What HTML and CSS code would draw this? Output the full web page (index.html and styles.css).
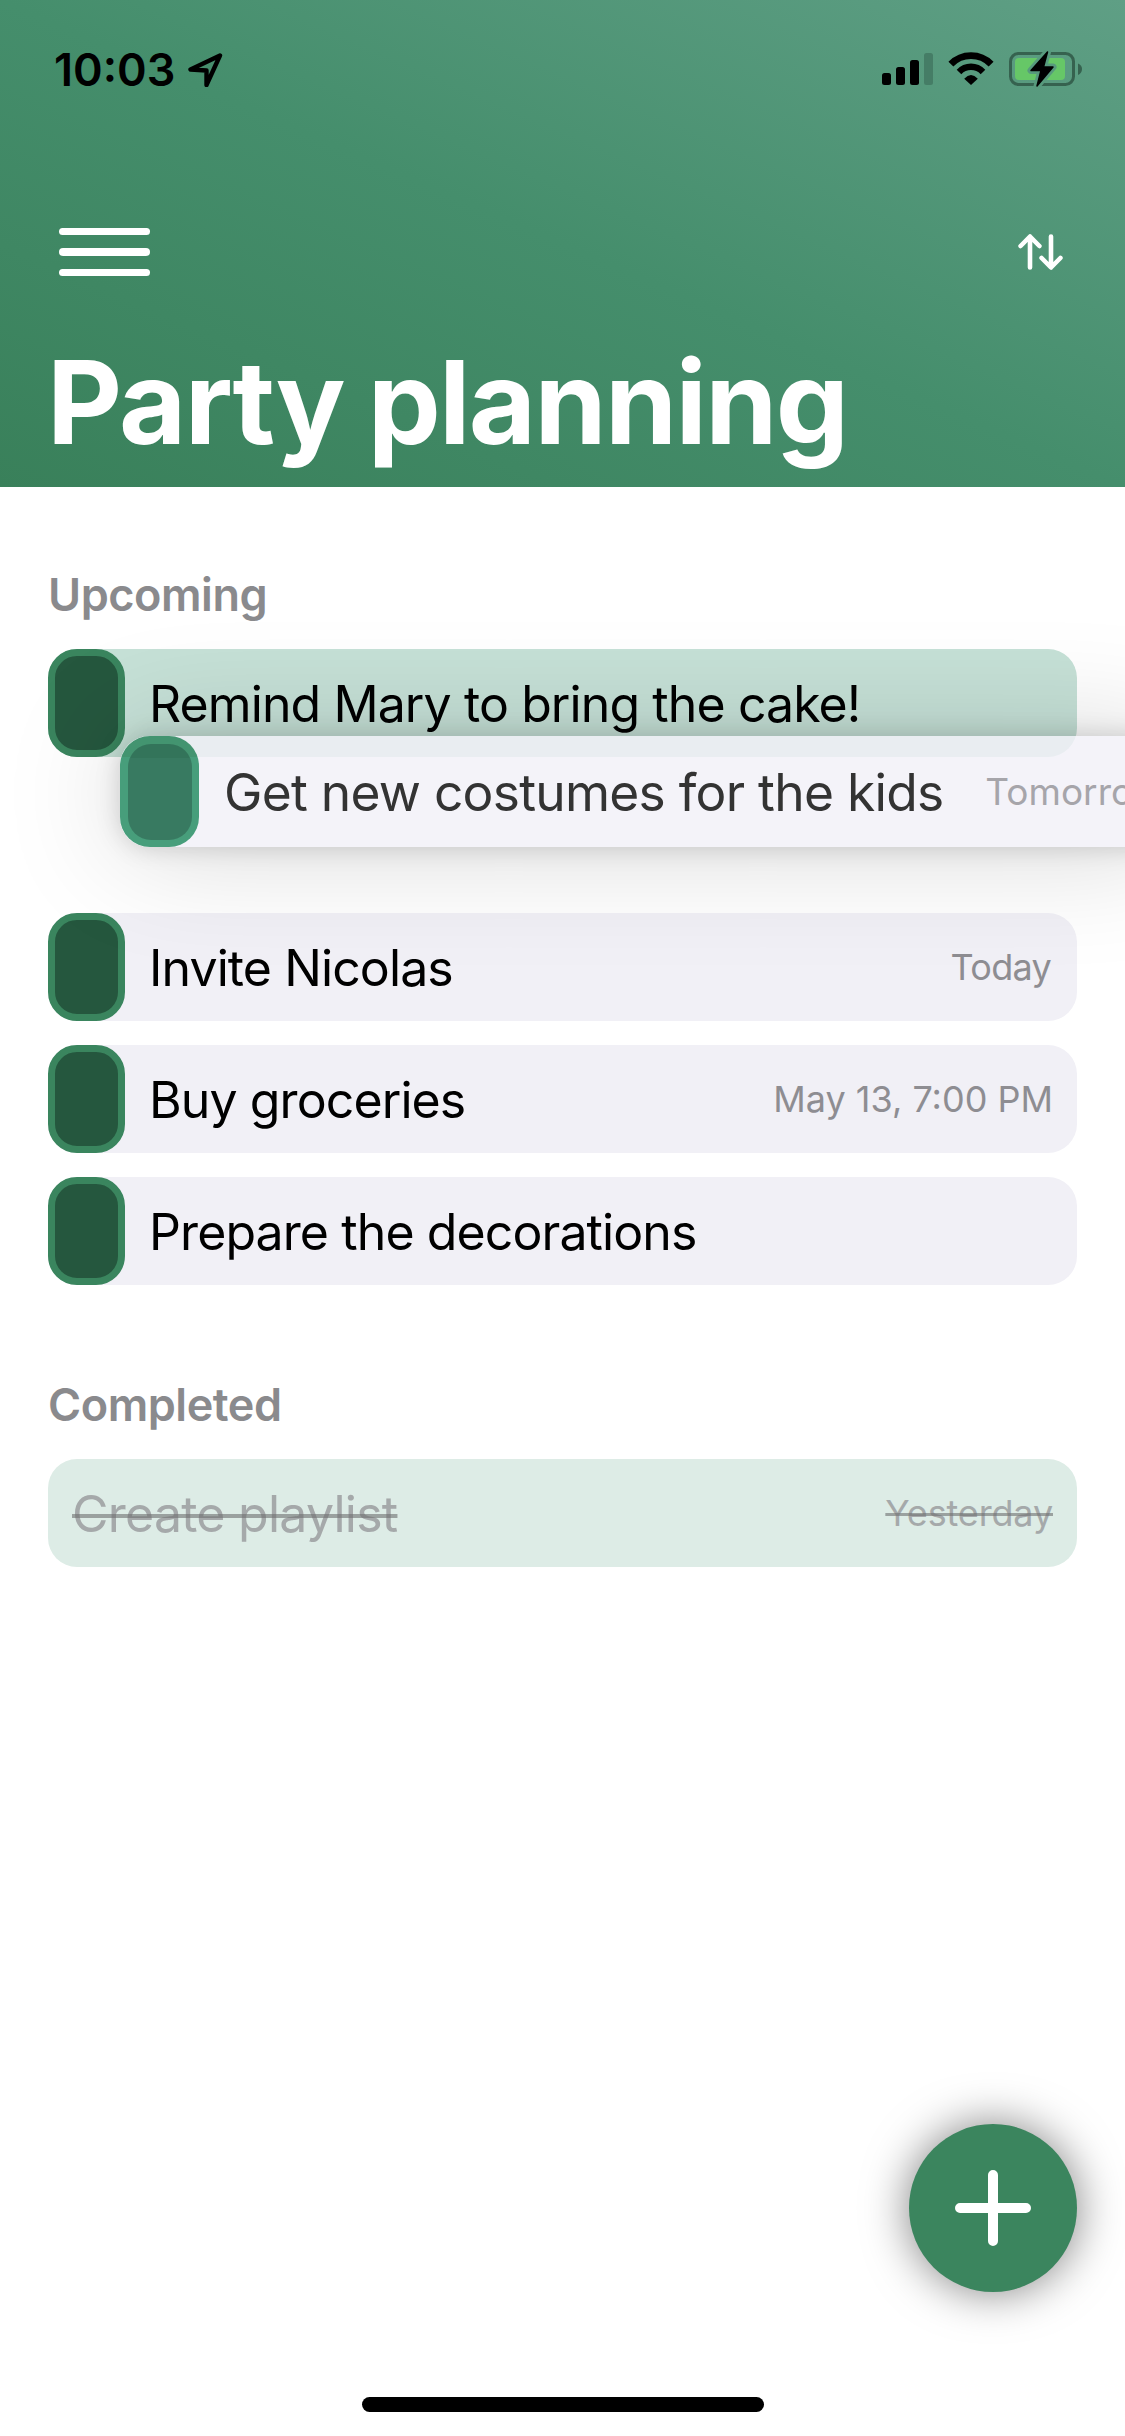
FILE: index.html
```html
<!DOCTYPE html>
<html lang="en">
<head>
<meta charset="utf-8">
<title>Party planning</title>
<link rel="stylesheet" href="styles.css">
</head>
<body>
<div class="screen">
  <header class="header">
    <div class="status">
      <span class="time">10:03</span>
      <svg class="location" width="36" height="36" viewBox="0 0 36 36"><path d="M33 4.500 3.500 18.500 19.500 19.500 19.500 34Z" fill="none" stroke="#000" stroke-width="4.400" stroke-linejoin="round"/></svg>
      <svg class="indicators" width="202" height="38" viewBox="880 50 202 38">
        <rect x="882" y="73" width="9" height="12" rx="2.500"/>
        <rect x="896" y="67" width="9" height="18" rx="2.500"/>
        <rect x="910" y="60" width="9" height="25" rx="2.500"/>
        <rect x="924" y="53" width="9" height="32" rx="2.500" fill="#457d66"/>
        <path d="M950.9 64.100A28 28 0 0 1 991.1 64.100" fill="none" stroke="#000" stroke-width="6.800"/>
        <path d="M959 71.900A16.700 16.700 0 0 1 983 71.900" fill="none" stroke="#000" stroke-width="6.400"/>
        <path d="M971 85 964.200 78.700Q971 71.500 977.800 78.700Z"/>
        <rect x="1010.500" y="53.500" width="63" height="31" rx="8" fill="none" stroke="#36624f" stroke-width="3"/>
        <path d="M1078 63.500Q1082 65 1082 69T1078 75Z" fill="#36624f"/>
        <rect x="1015" y="58" width="50" height="22" rx="4" fill="#66c767"/>
        <path d="M1047.500 52 1031 70.500H1041L1037 86 1053 67H1043.500Z" fill="#579a7d" stroke="#579a7d" stroke-width="7" stroke-linejoin="round"/>
        <path d="M1047.500 52 1031 70.500H1041L1037 86 1053 67H1043.500Z" stroke="#000" stroke-width="1.500" stroke-linejoin="round"/>
      </svg>
    </div>
    <nav class="nav">
      <div class="menu"><i></i><i></i><i></i></div>
      <svg class="sort" width="46" height="38" viewBox="0 0 46 38"><path d="M12 34.500V4.500M2.600 13 12 3.500 21.400 13M33 3.500V33.500M23.600 25 33 34.500 42.400 25" fill="none" stroke="#fff" stroke-width="4.600" stroke-linecap="round" stroke-linejoin="round"/></svg>
    </nav>
    <h1 class="title">Party planning</h1>
  </header>

  <main class="main">
    <section class="section">
      <h2 class="heading">Upcoming</h2>
      <div class="row target"><span class="handle"></span><span class="task">Remind Mary to bring the cake!</span></div>
      <div class="slot">
        <div class="row dragged"><span class="handle"></span><span class="task">Get new costumes for the kids</span><span class="date">Tomorrow</span></div>
      </div>
      <div class="row"><span class="handle"></span><span class="task">Invite Nicolas</span><span class="date today">Today</span></div>
      <div class="row"><span class="handle"></span><span class="task">Buy groceries</span><span class="date">May 13, 7:00 PM</span></div>
      <div class="row"><span class="handle"></span><span class="task">Prepare the decorations</span></div>
    </section>
    <section class="section">
      <h2 class="heading">Completed</h2>
      <div class="row done"><span class="task">Create playlist</span><span class="date">Yesterday</span></div>
    </section>
  </main>

  <div class="add"><svg width="76" height="76" viewBox="0 0 76 76"><path d="M38 5V71M5 38H71" stroke="#fff" stroke-width="10" stroke-linecap="round"/></svg></div>
  <div class="home"></div>
</div>
</body>
</html>
```
FILE: styles.css
```css
* { box-sizing: border-box; }
html, body { margin: 0; }
body { background: #fff; font-family: Inter, "Liberation Sans", sans-serif; color: #000; }
.screen { position: relative; width: 1125px; height: 2436px; overflow: hidden; background: #fff; }

.header { height: 487px; background: linear-gradient(to top right, #39805a, #458e6c 50%, #5f9f85); }
.status { display: flex; align-items: center; height: 138px; padding: 0 43px 0 54px; }
.time { font-size: 45px; font-weight: 600; }
.location { margin-left: 12px; }
.indicators { margin-left: auto; }
.nav { display: flex; align-items: center; justify-content: space-between; height: 128px; margin-top: 50px; padding: 0 61px 0 59px; }
.menu { display: flex; flex-direction: column; gap: 13px; width: 91px; }
.menu i { height: 7.300px; border-radius: 4px; background: #fff; }
.title { margin: 16px 0 0 47px; font-size: 116px; line-height: 140px; font-weight: 700; letter-spacing: -1.700px; word-spacing: -2px; color: #fff; white-space: nowrap; }

.main { padding: 78px 48px 0; }
.section { display: flex; flex-direction: column; gap: 24px; margin-bottom: 90px; }
.heading { margin: 0; font-size: 45px; line-height: 60px; font-weight: 600; letter-spacing: -0.450px; color: #8a8a8d; }
.row { display: flex; align-items: center; height: 108px; padding-right: 24px; border-radius: 29px; background: #f1f0f6; white-space: nowrap; }
.handle { flex: none; width: 77px; height: 108px; border: 7.500px solid #3a855e; border-radius: 29px; background: #25573e; }
.task { padding-top: 2px; margin-left: 24px; font-size: 50px; letter-spacing: -0.900px; }
.date { margin-left: auto; font-size: 36px; color: #8e8d92; }
.today { margin-right: 2px; letter-spacing: -0.700px; }
.target { background: #c6e1d7; }

/* The lifted row floats over its neighbours and leaves its slot empty */
.slot { position: relative; height: 108px; }
.dragged { position: absolute; left: 72px; top: -45px; z-index: 2; width: 1060px; height: 111px; background: rgba(241, 240, 248, 0.8); box-shadow: 0 0 24px rgba(0, 0, 0, 0.17), 0 2px 120px rgba(0, 0, 0, 0.17); }
.dragged .handle { width: 79px; height: 111px; padding: 7.500px; border: 0; border-radius: 30px; background: linear-gradient(#439470 21px, #479e7b 21px); }
.dragged .handle::before { content: ""; display: block; height: 96px; border-radius: 23px; background: linear-gradient(#33745a 13.500px, #387a61 13.500px); }
.dragged .task { padding-top: 0; margin-left: 25px; font-size: 51.500px; letter-spacing: -0.750px; color: #333; }
.dragged .date { margin-left: 42px; font-size: 37px; color: #a6a5aa; }

.done { background: #ddece6; }
.done .task, .done .date { color: #a5a9aa; text-decoration: line-through 4px rgba(110, 112, 112, 0.6); }
.done .task { letter-spacing: -0.750px; }
.done .date { letter-spacing: -0.150px; text-decoration-thickness: 3px; }

.add { position: absolute; right: 48px; top: 2124px; display: flex; align-items: center; justify-content: center; width: 168px; height: 168px; border-radius: 50%; background: #3b855e; box-shadow: 0 0 45px rgba(0, 0, 0, 0.5); }
.home { position: absolute; left: 362px; bottom: 24px; width: 402px; height: 15px; border-radius: 8px; background: #000; }
```
